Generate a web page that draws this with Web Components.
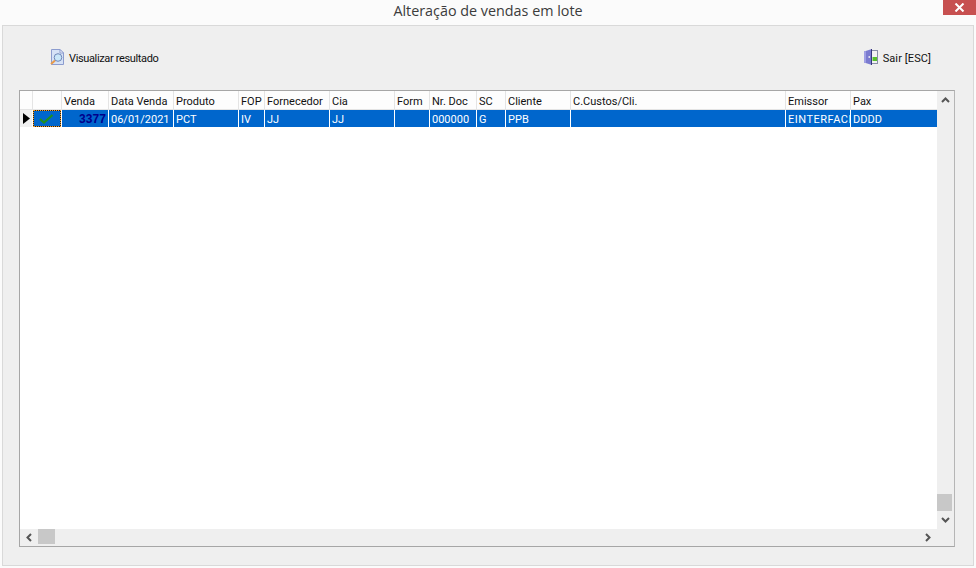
<!DOCTYPE html>
<html lang="pt"><head><meta charset="utf-8"><title>Alteração de vendas em lote</title>
<style>
html,body{margin:0;padding:0;width:976px;height:568px;overflow:hidden;background:#fbfbfb}
</style></head><body>
<app-window heading="Alteração de vendas em lote">
  <tool-button slot="left" kind="view" style="letter-spacing:-.36px">Visualizar resultado</tool-button>
  <tool-button slot="right" kind="exit" style="letter-spacing:.1px">Sair [ESC]</tool-button>
  <data-grid slot="grid"></data-grid>
</app-window>
<script>
class AppWindow extends HTMLElement{
  constructor(){super();const s=this.attachShadow({mode:'open'});
  s.innerHTML=`<style>
  :host{display:flex;flex-direction:column;width:976px;height:568px;box-sizing:border-box;background:#fbfbfb}
  header{height:25px;flex:none;display:flex;justify-content:center;position:relative;font:14.35px/22px "Open Sans",sans-serif;color:#3c3c3c}
  h1{font:inherit;margin:0}
  .close{position:absolute;right:0;top:0;width:33px;height:15px;background:#c75050;display:flex;align-items:center;justify-content:center}
  main{flex:none;margin:0 2px;height:541px;box-sizing:border-box;border:1px solid #d9d9d9;background:#efefef;display:flex;flex-direction:column;padding:0 18px 18px 16px}
  .bar{height:64px;box-sizing:border-box;flex:none;display:flex;justify-content:space-between;align-items:flex-start;padding:23px 24px 0 31px}
  .g{flex:1;display:flex;min-height:0}
  </style>
  <header><h1>${this.getAttribute('heading')}</h1><div class="close"><svg width="11" height="9" viewBox="0 0 11 9"><path d="M1.500 .5 9.500 8.500M9.500 .5 1.500 8.500" stroke="#fff" stroke-width="2" fill="none"/></svg></div></header>
  <main><div class="bar"><slot name="left"></slot><slot name="right"></slot></div><div class="g"><slot name="grid"></slot></div></main>`;}
}
class ToolButton extends HTMLElement{
  constructor(){super();const s=this.attachShadow({mode:'open'});
  const icons={view:`<svg width="14" height="16" viewBox="0 0 14 16"><path d="M1.500.5h8.500l3.500 3.500v11.500h-12z" fill="#d6e2f6" stroke="#8c9ccf"/><path d="M10 .5v3.500h3.500z" fill="#fff" stroke="#8c9ccf"/><circle cx="8" cy="8.500" r="3.800" fill="#c9e6f8" stroke="#6f86b8"/><path d="M5 11.500 1 15" stroke="#e89a4a" stroke-width="2"/></svg>`,
  exit:`<svg width="14" height="16" viewBox="0 0 14 16"><rect x="7" y="1.500" width="6.500" height="13" fill="#f2f2f2" stroke="#8a8fa8"/><rect x="8.500" y="8" width="4.500" height="4" fill="#58c02c"/><path d="M0 2.500 8 0v16l-8-2.500z" fill="#7b7bd0"/><path d="M0 2.500 2 2v12l-2-.5z" fill="#a0a0e4"/><path d="M7.500 0V16" stroke="#35357a"/><rect x="4.500" y="7" width="1.500" height="2" fill="#dde"/></svg>`};
  s.innerHTML=`<style>:host{display:flex;align-items:center;gap:5px;font:11px/16px Roboto,sans-serif;color:#111;height:16px}svg{display:block;flex:none}.t{display:block;margin-top:4px}</style>${icons[this.getAttribute('kind')]}<span class="t"><slot></slot></span>`;}
}
class GridCell extends HTMLElement{
  constructor(){super();const s=this.attachShadow({mode:'open'});
  s.innerHTML=`<style>:host{display:block;box-sizing:border-box;min-width:0;overflow:hidden;white-space:nowrap;padding:0 0 0 2px;font:11px/16px Roboto,sans-serif}
  :host([head]){background:#fdfdfd;color:#111;line-height:22px;height:18px;box-shadow:1px 0 0 #e4e4e4}
  :host([sel]){background:#0066cc;color:#fff;height:17px;line-height:20px}
  :host([num]){text-align:right;padding:0 2px 0 0;color:#00008b;font:bold 12px/19px "Liberation Sans",sans-serif;letter-spacing:.1px}
  </style><slot></slot>`;}
}
class DataGrid extends HTMLElement{
  constructor(){super();const s=this.attachShadow({mode:'open'});
  const cols=[['Venda',46],['Data Venda',64],['Produto',64],['FOP',25],['Fornecedor',64],['Cia',64],['Form',34],['Nr. Doc',46],['SC',28],['Cliente',64],['C.Custos/Cli.',214],['Emissor',64],['Pax',86]];
  const row=['3377','06/01/2021','PCT','IV','JJ','JJ','','000000','G','PPB','','EINTERFACE','DDDD'];
  const tpl=`12px 28px ${cols.map(c=>c[1]+'px').join(' ')}`;
  s.innerHTML=`<style>
  :host{display:block;flex:1;box-sizing:border-box;border:1px solid #a6a6a6;border-right-color:#b5b5b5;background:#efefef}
  .wrap{display:grid;grid-template-columns:1fr 17px;grid-template-rows:1fr 17px;height:100%}
  .area{background:#fff;overflow:hidden}
  .t{display:grid;grid-template-columns:${tpl};column-gap:1px;width:918px}
  .rule{grid-column:1/-1;height:1px;background:#e4e4e4}
  .blank{background:#fdfdfd;height:18px;box-shadow:1px 0 0 #e4e4e4}
  .ind{height:17px;background:#f0f0f0;display:flex;align-items:center;justify-content:flex-end;padding-right:2px;box-sizing:border-box}
  .chk{height:17px;box-sizing:border-box;background:#0066cc;border:1px solid #222;outline:1px dotted #f59a23;outline-offset:-1px;display:flex;align-items:center;justify-content:center;padding-right:2px}
  .v{background:#efefef;display:flex;flex-direction:column;align-items:center;position:relative}
  .h{background:#efefef;display:flex;align-items:center;position:relative}
  .a{display:block;flex:none}
  .vt{position:absolute;left:0;top:403px;width:15px;height:17px;background:#c8c8c8}
  .ht{width:17px;height:15px;background:#c8c8c8;margin-left:18px;align-self:flex-start}
  .sp{flex:1}
  .corner{background:#efefef}
  </style>
  <div class="wrap"><div class="area"><div class="t">
  <div class="blank"></div><div class="blank"></div>
  ${cols.map(c=>`<grid-cell head>${c[0]}</grid-cell>`).join('')}
  <div class="rule"></div>
  <div class="ind"><svg width="7" height="11" viewBox="0 0 7 11"><path d="M0 0 7 5.500 0 11z" fill="#000"/></svg></div>
  <div class="chk"><svg width="15" height="10" viewBox="0 0 15 10"><path d="M1 5 5 8.500 13.500 1" fill="none" stroke="#1f8f1f" stroke-width="2.200"/></svg></div>
  ${row.map((v,i)=>`<grid-cell sel ${i==0?'num':''} ${i==11?'style="letter-spacing:.5px"':''}>${v}</grid-cell>`).join('')}
  </div></div>
  <div class="v"><svg class="a" style="margin-top:6px" width="9" height="6" viewBox="0 0 9 6"><path d="M1 5 4.500 1.500 8 5" fill="none" stroke="#555" stroke-width="2"/></svg><div class="vt"></div><div class="sp"></div><svg class="a" style="margin-bottom:6px" width="9" height="6" viewBox="0 0 9 6"><path d="M1 1 4.500 4.500 8 1" fill="none" stroke="#555" stroke-width="2"/></svg></div>
  <div class="h"><svg class="a" style="margin-left:6px;position:absolute" width="6" height="9" viewBox="0 0 6 9"><path d="M5 1 1.500 4.500 5 8" fill="none" stroke="#555" stroke-width="2"/></svg><div class="ht"></div><div class="sp"></div><svg class="a" style="margin-right:6px" width="6" height="9" viewBox="0 0 6 9"><path d="M1 1 4.500 4.500 1 8" fill="none" stroke="#555" stroke-width="2"/></svg></div>
  <div class="corner"></div></div>`;}
}
customElements.define('grid-cell',GridCell);
customElements.define('tool-button',ToolButton);
customElements.define('data-grid',DataGrid);
customElements.define('app-window',AppWindow);
</script></body></html>
